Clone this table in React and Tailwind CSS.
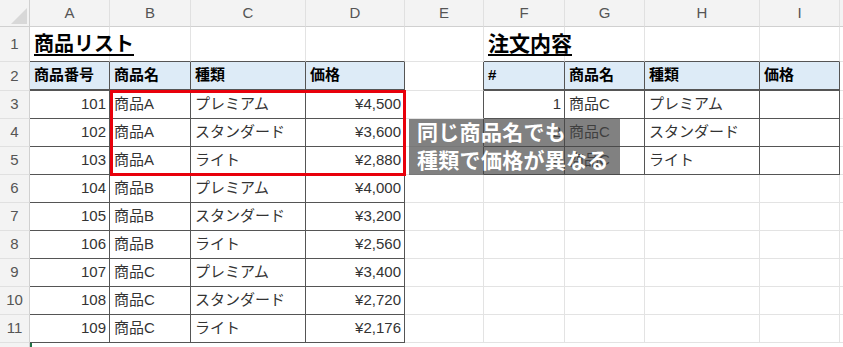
import React from "react";

const letters = ["A", "B", "C", "D", "E", "F", "G", "H", "I"];

// sheet contents keyed by row number, one entry per column A..I
const sheet = {
  2: [
    "商品番号", "商品名", "種類", "価格", "",
    "#", "商品名", "種類", "価格",
  ],
  3: [101, "商品A", "プレミアム", "¥4,500", "", 1, "商品C", "プレミアム", ""],
  4: [102, "商品A", "スタンダード", "¥3,600", "", 2, "商品C", "スタンダード", ""],
  5: [103, "商品A", "ライト", "¥2,880", "", 3, "商品C", "ライト", ""],
  6: [104, "商品B", "プレミアム", "¥4,000"],
  7: [105, "商品B", "スタンダード", "¥3,200"],
  8: [106, "商品B", "ライト", "¥2,560"],
  9: [107, "商品C", "プレミアム", "¥3,400"],
  10: [108, "商品C", "スタンダード", "¥2,720"],
  11: [109, "商品C", "ライト", "¥2,176"],
};

// table ranges: columns 1-4 rows 2-11, columns 6-9 rows 2-5
const inTable = (r, c) =>
  (c >= 1 && c <= 4 && r >= 2 && r <= 11) || (c >= 6 && c <= 9 && r >= 2 && r <= 5);

const isRight = (r, c) => {
  const v = sheet[r] && sheet[r][c - 1];
  return r >= 3 && (typeof v === "number" || (typeof v === "string" && v.startsWith("¥")));
};

const Cell = ({ r, c }) => {
  const value = sheet[r] ? sheet[r][c - 1] : undefined;
  const darkRight = inTable(r, c) || inTable(r, c + 1);
  const darkBottom = inTable(r, c) || inTable(r + 1, c);
  const head = r === 2 && inTable(r, c);

  let cls = "flex items-center overflow-visible whitespace-nowrap text-[15px] ";
  cls += darkRight ? "border-r border-r-[#555] " : "border-r border-r-[#e3e3e3] ";
  if (head) cls += "border-b-2 border-b-[#555] bg-[#ddebf7] font-bold text-black pl-[4px] ";
  else cls += darkBottom ? "border-b border-b-[#555] " : "border-b border-b-[#e3e3e3] ";
  if (!head) cls += "text-[#333] ";
  if (!head && isRight(r, c)) cls += "justify-end pr-[3px] ";
  else if (!head) cls += "pl-[4px] ";

  return <div className={cls}>{value}</div>;
};

export default function App() {
  const rows = [1, 2, 3, 4, 5, 6, 7, 8, 9, 10, 11];

  return (
    <div className="relative w-[843px] h-[347px] overflow-hidden bg-white font-['Liberation_Sans','Noto_Sans_CJK_JP',sans-serif]">
      <div className="grid h-[347px] grid-cols-[30px_80px_81px_115px_99px_79px_81px_80px_115px_80px_1fr] grid-rows-[27px_35px_29px_repeat(9,28px)_1fr]">
        {/* corner */}
        <div className="relative border-r border-b border-[#d0d0d0] bg-[#f3f3f3]">
          <svg width="30" height="27" className="absolute left-0 top-0">
            <polygon points="11,24 27,24 27,8" fill="#d8d8d8" />
          </svg>
        </div>
        {letters.map((l) => (
          <div
            key={l}
            className="flex items-center justify-center border-r border-b border-r-[#e0e0e0] border-b-[#d0d0d0] bg-[#f3f3f3] text-[15px] text-[#555]"
          >
            {l}
          </div>
        ))}
        <div className="border-b border-[#d0d0d0] bg-[#f3f3f3]" />

        {rows.map((r) => (
          <React.Fragment key={r}>
            <div className="flex items-center justify-center border-r border-b border-r-[#d0d0d0] border-b-[#e0e0e0] bg-[#f3f3f3] text-[15px] text-[#555]">
              {r}
            </div>
            {r === 1
              ? letters.map((l, i) => (
                  <div
                    key={l}
                    className="flex items-center overflow-visible whitespace-nowrap border-r border-b border-r-[#e3e3e3] pl-[4px]"
                    style={{ borderBottomColor: inTable(2, i + 1) ? "#555" : "#e3e3e3" }}
                  >
                    {i === 0 && (
                      <span className="relative z-10 text-[20px] font-bold text-black underline decoration-2 underline-offset-[3px]">
                        商品リスト
                      </span>
                    )}
                    {i === 5 && (
                      <span className="relative z-10 text-[21px] font-bold text-black underline decoration-2 underline-offset-[3px]">
                        注文内容
                      </span>
                    )}
                  </div>
                ))
              : letters.map((l, i) => <Cell key={l} r={r} c={i + 1} />)}
            <div className="border-b border-[#e3e3e3]" />
          </React.Fragment>
        ))}

        <div className="border-r border-[#d0d0d0] bg-[#f3f3f3]" />
        <div className="col-span-10 border-l-2 border-l-[#217346]" />
      </div>

      {/* highlight around 商品A rows */}
      <div className="absolute left-[110px] top-[90px] h-[86px] w-[296px] border-[3px] border-[#e8000b]" />

      {/* callout */}
      <div className="absolute left-[409px] top-[119px] flex h-[56px] w-[211px] flex-col justify-center bg-[rgba(70,70,70,0.68)] pl-[8px] text-[21px] font-bold leading-[28px] tracking-[0.3px] text-white">
        <span>同じ商品名でも</span>
        <span>種類で価格が異なる</span>
      </div>
    </div>
  );
}
